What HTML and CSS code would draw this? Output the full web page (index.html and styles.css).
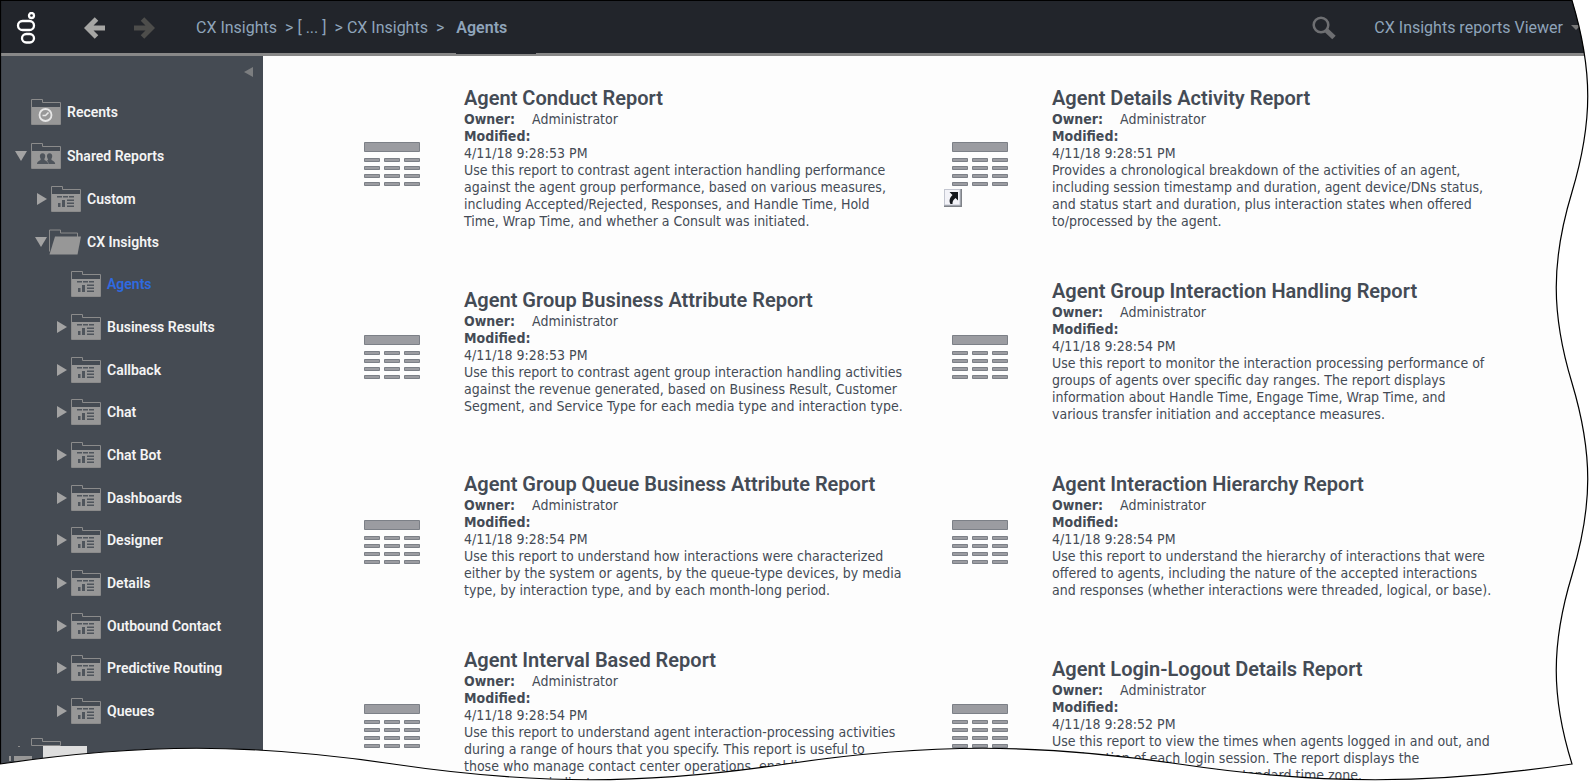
FILE: index.html
```html
<!DOCTYPE html>
<html lang="en">
<head>
<meta charset="utf-8">
<title>CX Insights - Agents</title>
<link rel="stylesheet" href="styles.css">
</head>
<body>
<svg class="sprite" aria-hidden="true">
  <symbol id="folder-base" viewBox="0 0 30 26">
    <path d="M.5 25.5V.5H11.5V3.500H29.500V25.500Z" fill="none" stroke="#8b8b8b"/>
    <path d="M1 8H29V25H1Z" fill="#979797"/>
  </symbol>
  <symbol id="folder-report" viewBox="0 0 30 26">
    <use href="#folder-base"/>
    <path d="M6 10h5v1.600H6zM12 10h5v1.600h-5zM18 10h5v1.600h-5zM16 13.500h7v1.400h-7zM16 16.500h7v1.400h-7zM16 19.500h7v1.400h-7zM11 14h3v7h-3zM7 17h2.500v4H7z" fill="#4f555c"/>
  </symbol>
  <symbol id="folder-clock" viewBox="0 0 30 26">
    <use href="#folder-base"/>
    <circle cx="14.500" cy="16" r="6" fill="none" stroke="#e6e6e6" stroke-width="1.800"/>
    <path d="M11.500 16.500H14.500L17.500 13.500" fill="none" stroke="#e6e6e6" stroke-width="1.600"/>
  </symbol>
  <symbol id="folder-people" viewBox="0 0 30 26">
    <use href="#folder-base"/>
    <path d="M18.500 10.300c2 0 3 1.400 2.700 3.200-.2 1.400-.8 2-.8 3 0 1.200 3.600 1.200 3.800 4.500H17.500c0-2-.8-2.700-1.800-3.300 1-.4 1.300-.6 1.300-1.200 0-1-.9-1.800-1-3.100-.1-1.800.7-3.100 2.500-3.100zM11.500 10.300c2 0 3 1.400 2.700 3.200-.2 1.400-.8 2-.8 3 0 1.200 3.600 1.200 3.800 4.500H6c.2-3.300 3.700-3.300 3.700-4.500 0-1-.7-1.700-.8-3-.2-1.900.8-3.200 2.600-3.200z" fill="#4f555c"/>
  </symbol>
  <symbol id="folder-open" viewBox="0 0 32 25">
    <path d="M.5 22V.5H11.500V3.500H28.500V8" fill="none" stroke="#8b8b8b"/>
    <path d="M6 7H32L28.500 25H0.500Z" fill="#979797"/>
  </symbol>
  <symbol id="report-grid" viewBox="0 0 56 44">
    <g fill="#9b9ca1" stroke="#7c8087">
      <path d="M.5.5h55v9H.5z"/>
      <path d="M.5 16.500h15v3H.5zM20.500 16.500h15v3h-15zM40.500 16.500h15v3h-15zM.5 24.500h15v3H.5zM20.500 24.500h15v3h-15zM40.500 24.500h15v3h-15zM.5 32.500h15v3H.5zM20.500 32.500h15v3h-15zM40.500 32.500h15v3h-15zM.5 40.500h15v3H.5zM20.500 40.500h15v3h-15zM40.500 40.500h15v3h-15z"/>
    </g>
  </symbol>
  <symbol id="arrow" viewBox="0 0 22 22">
    <path d="M21 11H3.500M12.500 2L3.500 11L12.500 20" fill="none" stroke="currentColor" stroke-width="5"/>
  </symbol>
  <symbol id="tri-right" viewBox="0 0 12 12"><path d="M2 0L12 6L2 12Z" fill="#a3a3a3"/></symbol>
  <symbol id="tri-down" viewBox="0 0 12 12"><path d="M0 1H12L6 11Z" fill="#a3a3a3"/></symbol>
</svg>

<div class="app">
  <header class="topbar">
    <svg class="logo" viewBox="0 0 20 32" role="img" aria-label="Genesys">
      <g fill="none" stroke="#fff" stroke-width="2.300">
        <circle cx="15.500" cy="3.500" r="2.500"/>
        <rect x="2" y="9" width="16" height="9" rx="4.500"/>
        <rect x="6" y="22" width="12" height="8.500" rx="4.200"/>
      </g>
    </svg>
    <button class="nav back" type="button" aria-label="Back"><svg><use href="#arrow"/></svg></button>
    <button class="nav forward" type="button" aria-label="Forward"><svg><use href="#arrow"/></svg></button>
    <nav class="crumbs" aria-label="Breadcrumb">
      <a href="#">CX Insights</a><span class="sep">&gt;</span><a href="#" class="dots">[ ... ]</a><span class="sep near">&gt;</span><a href="#">CX Insights</a><span class="sep">&gt;</span><a href="#" class="current">Agents</a>
    </nav>
    <button class="search" type="button" aria-label="Search">
      <svg viewBox="0 0 24 24"><circle cx="9" cy="9" r="7.300" fill="none" stroke="#6e6f72" stroke-width="2.500"/><path d="M14.500 14.500L22 21.500" stroke="#6e6f72" stroke-width="5"/></svg>
    </button>
    <button class="user" type="button">CX Insights reports Viewer<svg viewBox="0 0 10 5"><path d="M0 0H10L5 5Z" fill="#777"/></svg></button>
  </header>

  <div class="body">
    <aside class="sidebar">
      <button class="collapse" type="button" aria-label="Collapse panel"><svg viewBox="0 0 9 10"><path d="M9 0V10L0 5Z" fill="#7c7e80"/></svg></button>
      <ul class="tree">
        <li><a class="node first" href="#"><span class="twist"></span><svg class="folder"><use href="#folder-clock"/></svg>Recents</a></li>
        <li><a class="node" href="#"><svg class="twist"><use href="#tri-down"/></svg><svg class="folder"><use href="#folder-people"/></svg>Shared Reports</a></li>
        <li><a class="node l1" href="#"><svg class="twist"><use href="#tri-right"/></svg><svg class="folder"><use href="#folder-report"/></svg>Custom</a></li>
        <li><a class="node l1 open" href="#"><svg class="twist"><use href="#tri-down"/></svg><svg class="folder"><use href="#folder-open"/></svg>CX Insights</a>
          <ul class="branch">
            <li><a class="node l2 active" href="#"><span class="twist"></span><svg class="folder"><use href="#folder-report"/></svg>Agents</a></li>
            <li><a class="node l2" href="#"><svg class="twist"><use href="#tri-right"/></svg><svg class="folder"><use href="#folder-report"/></svg>Business Results</a></li>
            <li><a class="node l2" href="#"><svg class="twist"><use href="#tri-right"/></svg><svg class="folder"><use href="#folder-report"/></svg>Callback</a></li>
            <li><a class="node l2" href="#"><svg class="twist"><use href="#tri-right"/></svg><svg class="folder"><use href="#folder-report"/></svg>Chat</a></li>
            <li><a class="node l2" href="#"><svg class="twist"><use href="#tri-right"/></svg><svg class="folder"><use href="#folder-report"/></svg>Chat Bot</a></li>
            <li><a class="node l2" href="#"><svg class="twist"><use href="#tri-right"/></svg><svg class="folder"><use href="#folder-report"/></svg>Dashboards</a></li>
            <li><a class="node l2" href="#"><svg class="twist"><use href="#tri-right"/></svg><svg class="folder"><use href="#folder-report"/></svg>Designer</a></li>
            <li><a class="node l2" href="#"><svg class="twist"><use href="#tri-right"/></svg><svg class="folder"><use href="#folder-report"/></svg>Details</a></li>
            <li><a class="node l2" href="#"><svg class="twist"><use href="#tri-right"/></svg><svg class="folder"><use href="#folder-report"/></svg>Outbound Contact</a></li>
            <li><a class="node l2" href="#"><svg class="twist"><use href="#tri-right"/></svg><svg class="folder"><use href="#folder-report"/></svg>Predictive Routing</a></li>
            <li><a class="node l2" href="#"><svg class="twist"><use href="#tri-right"/></svg><svg class="folder"><use href="#folder-report"/></svg>Queues</a></li>
          </ul>
        </li>
      </ul>
      <svg class="tail" viewBox="0 0 87 36" aria-hidden="true">
        <path d="M30.500 13.500V6.500H41.500V9.500H59.500V13.500Z" fill="none" stroke="#8b8b8b"/>
        <path d="M42 14H86V36H42Z" fill="#dedede"/>
        <path d="M8 24h2v5H8zM13 24h18v5H13z" fill="#979797"/>
        <path d="M17 14h2v1h-2z" fill="#8b8b8b"/>
      </svg>
    </aside>

    <main class="reports">
      <article class="report">
        <svg class="grid-icon"><use href="#report-grid"/></svg>
        <div class="info">
          <h2><a href="#">Agent Conduct Report</a></h2>
          <p><b class="owner">Owner:</b>Administrator</p>
          <p><b>Modified:</b></p>
          <p>4/11/18 9:28:53 PM</p>
          <p>Use this report to contrast agent interaction handling performance against the agent group performance, based on various measures, including Accepted/Rejected, Responses, and Handle Time, Hold Time, Wrap Time, and whether a Consult was initiated.</p>
        </div>
      </article>
      <article class="report">
        <div class="grid-icon">
          <svg class="grid-icon-art"><use href="#report-grid"/></svg>
          <svg class="shortcut" viewBox="0 0 18 18" role="img" aria-label="Shortcut">
            <path d="M0 0H18V18H0Z" fill="#7f8288"/><path d="M0 0H16.500V16.500H0Z" fill="#c3c6d0"/><path d="M1 1H15.500V15.500H1Z" fill="#f3f3f8"/>
            <path d="M5.500 3H14V11.500L11.500 9C9 11 8.500 12.500 8.500 15L6.500 15C4.500 11.500 6 8.500 8.500 6Z" fill="#15181d"/>
          </svg>
        </div>
        <div class="info">
          <h2><a href="#">Agent Details Activity Report</a></h2>
          <p><b class="owner">Owner:</b>Administrator</p>
          <p><b>Modified:</b></p>
          <p>4/11/18 9:28:51 PM</p>
          <p>Provides a chronological breakdown of the activities of an agent, including session timestamp and duration, agent device/DNs status, and status start and duration, plus interaction states when offered to/processed by the agent.</p>
        </div>
      </article>
      <article class="report">
        <svg class="grid-icon"><use href="#report-grid"/></svg>
        <div class="info">
          <h2><a href="#">Agent Group Business Attribute Report</a></h2>
          <p><b class="owner">Owner:</b>Administrator</p>
          <p><b>Modified:</b></p>
          <p>4/11/18 9:28:53 PM</p>
          <p>Use this report to contrast agent group interaction handling activities against the revenue generated, based on Business Result, Customer Segment, and Service Type for each media type and interaction type.</p>
        </div>
      </article>
      <article class="report">
        <svg class="grid-icon"><use href="#report-grid"/></svg>
        <div class="info">
          <h2><a href="#">Agent Group Interaction Handling Report</a></h2>
          <p><b class="owner">Owner:</b>Administrator</p>
          <p><b>Modified:</b></p>
          <p>4/11/18 9:28:54 PM</p>
          <p>Use this report to monitor the interaction processing performance of groups of agents over specific day ranges. The report displays information about Handle Time, Engage Time, Wrap Time, and various transfer initiation and acceptance measures.</p>
        </div>
      </article>
      <article class="report">
        <svg class="grid-icon"><use href="#report-grid"/></svg>
        <div class="info">
          <h2><a href="#">Agent Group Queue Business Attribute Report</a></h2>
          <p><b class="owner">Owner:</b>Administrator</p>
          <p><b>Modified:</b></p>
          <p>4/11/18 9:28:54 PM</p>
          <p>Use this report to understand how interactions were characterized either by the system or agents, by the queue-type devices, by media type, by interaction type, and by each month-long period.</p>
        </div>
      </article>
      <article class="report">
        <svg class="grid-icon"><use href="#report-grid"/></svg>
        <div class="info">
          <h2><a href="#">Agent Interaction Hierarchy Report</a></h2>
          <p><b class="owner">Owner:</b>Administrator</p>
          <p><b>Modified:</b></p>
          <p>4/11/18 9:28:54 PM</p>
          <p>Use this report to understand the hierarchy of interactions that were offered to agents, including the nature of the accepted interactions and responses (whether interactions were threaded, logical, or base).</p>
        </div>
      </article>
      <article class="report">
        <svg class="grid-icon"><use href="#report-grid"/></svg>
        <div class="info">
          <h2><a href="#">Agent Interval Based Report</a></h2>
          <p><b class="owner">Owner:</b>Administrator</p>
          <p><b>Modified:</b></p>
          <p>4/11/18 9:28:54 PM</p>
          <p>Use this report to understand agent interaction-processing activities during a range of hours that you specify. This report is useful to<br>those who manage contact center operations, enabling review of key performance indicators.</p>
        </div>
      </article>
      <article class="report">
        <svg class="grid-icon"><use href="#report-grid"/></svg>
        <div class="info">
          <h2><a href="#">Agent Login-Logout Details Report</a></h2>
          <p><b class="owner">Owner:</b>Administrator</p>
          <p><b>Modified:</b></p>
          <p>4/11/18 9:28:52 PM</p>
          <p>Use this report to view the times when agents logged in and out, and the duration of each login session. The report displays the<br>information according to the standard time zone.</p>
        </div>
      </article>
    </main>
  </div>

  <svg class="torn-edge" viewBox="0 0 1589 782" preserveAspectRatio="none" aria-hidden="true">
    <path fill="#fff" d="M1572 0C1593 70 1593 122 1572 192C1551 261 1551 314 1572 383C1593 453 1593 505 1572 575C1551 644 1551 697 1572 764C1430 785 1320 785 1179 764C1037 743 928 743 786 764C645 785 535 785 393 764C251 743 142 743 0 764V782H1589V0Z"/>
    <path fill="none" stroke="#000" stroke-width="1.200" d="M.5 764V.5H1572C1593 70 1593 122 1572 192C1551 261 1551 314 1572 383C1593 453 1593 505 1572 575C1551 644 1551 697 1572 764C1430 785 1320 785 1179 764C1037 743 928 743 786 764C645 785 535 785 393 764C251 743 142 743 0 764"/>
  </svg>
</div>
</body>
</html>
```
FILE: styles.css
```css
* {
  box-sizing: border-box;
}

body {
  margin: 0;
  font-family: Roboto, sans-serif;
  color: #444b55;
}

a {
  color: inherit;
  text-decoration: none;
}

button {
  border: 0;
  padding: 0;
  background: none;
  font: inherit;
  color: inherit;
  cursor: pointer;
}

svg {
  display: block;
  flex: none;
}

ul {
  list-style: none;
  margin: 0;
  padding: 0;
}

.sprite {
  position: absolute;
  width: 0;
  height: 0;
}

.app {
  position: relative;
  display: flex;
  flex-direction: column;
  height: 100vh;
  overflow: hidden;
}

/* Top bar */
.topbar {
  display: flex;
  flex: none;
  align-items: center;
  height: 56px;
  padding: 2px 8px 0 16px;
  background: #22252b;
  border-bottom: 3px solid #888;
  color: #8fa4ba;
  font-size: 16px;
}

.logo {
  width: 20px;
  height: 32px;
  margin-right: 48px;
}

.nav svg {
  width: 22px;
  height: 22px;
}

.back {
  margin-right: 27px;
  color: #a6a6a4;
}

.forward {
  margin-right: 41px;
  color: #4d4d4b;
  transform: scaleX(-1);
}

.crumbs {
  display: flex;
  flex: 1;
  align-self: stretch;
  line-height: 52px;
}

.sep {
  margin: 0 4px 0 8px;
}

.current {
  width: 80px;
  margin: 0 0 -1px 8px;
  background: #22252b;
  font-weight: 600;
}

.search {
  margin-right: 38px;
}

.search svg {
  width: 24px;
  height: 24px;
}

.user {
  display: flex;
  align-items: center;
  gap: 8px;
}

.user svg {
  width: 10px;
  height: 5px;
}

/* Folder tree */
.body {
  display: flex;
  flex: 1;
  min-height: 0;
}

.sidebar {
  display: flex;
  flex: none;
  flex-direction: column;
  width: 263px;
  padding: 11px 0 0 1px;
  background: #454b53;
  overflow: hidden;
}

.collapse {
  align-self: flex-end;
  margin: 0 10px 13px 0;
}

.collapse svg {
  width: 9px;
  height: 10px;
}

.node {
  display: flex;
  align-items: center;
  height: 43px;
  padding-left: 14px;
  color: #f4f4f4;
  font-size: 14px;
  font-weight: 600;
}

.node.first {
  height: 44px;
}

.node.l1 {
  padding-left: 34px;
}

.node.l2 {
  padding-left: 54px;
}

.node.active {
  color: #2f6ae0;
}

.branch li:nth-child(3n + 1) .node {
  height: 42px;
}

.twist {
  flex: none;
  width: 12px;
  height: 12px;
  margin-right: 4px;
}

.folder {
  width: 30px;
  height: 26px;
  margin-right: 6px;
}

.open .twist {
  margin-right: 2px;
}

.open .folder {
  width: 32px;
}

.tail {
  width: 87px;
  height: 36px;
}

/* Report list */
.reports {
  display: grid;
  flex: 1;
  grid-template-columns: repeat(2, minmax(0, 1fr));
  align-content: start;
  align-items: center;
  gap: 49px 42px;
  padding: 30px 91px 0 101px;
  background: #fdfdfd;
  overflow: hidden;
}

.report {
  display: flex;
  align-items: center;
  gap: 44px;
}

.grid-icon {
  position: relative;
  flex: none;
  width: 56px;
  height: 44px;
  margin-top: 12px;
}

.grid-icon-art {
  width: 56px;
  height: 44px;
}

.shortcut {
  position: absolute;
  top: 47px;
  left: -8px;
  width: 18px;
  height: 18px;
}

.info {
  flex: 1;
  padding-right: 4px;
  font: 14px/17px "DejaVu Sans Condensed", "DejaVu Sans", sans-serif;
}

.info h2 {
  margin: 0;
  font: 600 20px/25px Roboto, sans-serif;
}

.info p {
  margin: 0;
}

.owner {
  margin-right: 17px;
}

/* Torn paper outline drawn over the window */
.torn-edge {
  position: absolute;
  inset: 0;
  width: 100%;
  height: 100%;
  pointer-events: none;
}
```
